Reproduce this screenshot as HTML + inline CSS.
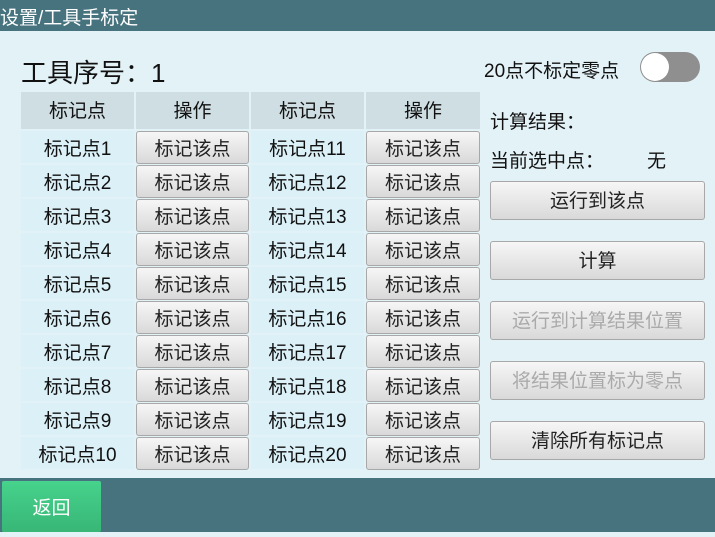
<!DOCTYPE html><html><head><meta charset="utf-8"><style>
*{margin:0;padding:0;box-sizing:border-box}
body{width:715px;height:532px;background:#e3f2f7;font-family:"Liberation Sans","Noto Sans CJK SC",sans-serif;position:relative;overflow:hidden;color:#111}
.hdr{position:absolute;left:0;top:0;width:715px;height:31px;background:#47737f;color:#fff;font-size:19px;overflow:hidden}
.hdr span{position:absolute;left:0;top:8px;line-height:22px}
.title{position:absolute;left:21px;top:57px;font-size:26px;line-height:32px}
.cell{position:absolute;height:32px;background:#dbf0f7;font-size:19px;text-align:center;line-height:38px}
.h{background:#cfdee3;height:37px;line-height:40px}
.btn{position:absolute;border:1px solid #a8a8a8;border-radius:3px;background:linear-gradient(#f6f6f6,#d9d9d9);text-align:center;font-size:19px;color:#222}
.rb{left:490px;width:215px;height:39px;line-height:40px}
.dis{color:#aaa}
.foot{position:absolute;left:0;top:478px;width:715px;height:54px;background:#47737f}
.back{position:absolute;left:2px;top:481px;width:99px;height:51px;background:linear-gradient(#46d38c,#38b676);color:#fff;font-size:19px;text-align:center;line-height:56px;border-radius:2px}
.tog{position:absolute;left:640px;top:52px;width:60px;height:30px;border-radius:15px;background:#8f8f8f}
.tog i{position:absolute;left:1px;top:1px;width:28px;height:28px;border-radius:50%;background:#fff}
.lbl{position:absolute;font-size:19px;line-height:24px}
</style></head><body>
<div class="hdr"><span>设置/工具手标定</span></div>
<div class="title">工具序号：1</div>
<div class="lbl" style="left:484px;top:60px">20点不标定零点</div>
<div class="tog"><i></i></div>
<div class="lbl" style="left:490px;top:111px">计算结果：</div>
<div class="lbl" style="left:490px;top:150px">当前选中点：</div>
<div class="lbl" style="left:647px;top:150px">无</div>
<div class="btn rb" style="top:181px">运行到该点</div>
<div class="btn rb" style="top:241px">计算</div>
<div class="btn rb dis" style="top:301px">运行到计算结果位置</div>
<div class="btn rb dis" style="top:361px">将结果位置标为零点</div>
<div class="btn rb" style="top:421px">清除所有标记点</div>
<div class="cell h" style="left:21px;top:92px;width:113px">标记点</div>
<div class="cell h" style="left:136px;top:92px;width:113px">操作</div>
<div class="cell h" style="left:251px;top:92px;width:113px">标记点</div>
<div class="cell h" style="left:366px;top:92px;width:114px">操作</div>
<div id="rows"></div>
<script>
var h='';for(var i=0;i<10;i++){var t=131+i*34;
h+='<div class="cell" style="left:21px;top:'+t+'px;width:113px">标记点'+(i+1)+'</div>';
h+='<div class="cell" style="left:136px;top:'+t+'px;width:113px"></div>';
h+='<div class="btn" style="left:136px;top:'+t+'px;width:113px;height:33px;line-height:36px">标记该点</div>';
h+='<div class="cell" style="left:251px;top:'+t+'px;width:113px">标记点'+(i+11)+'</div>';
h+='<div class="cell" style="left:366px;top:'+t+'px;width:114px"></div>';
h+='<div class="btn" style="left:366px;top:'+t+'px;width:114px;height:33px;line-height:36px">标记该点</div>';}
document.getElementById('rows').innerHTML=h;
</script>
<div class="foot"></div>
<div class="back">返回</div>
</body></html>
